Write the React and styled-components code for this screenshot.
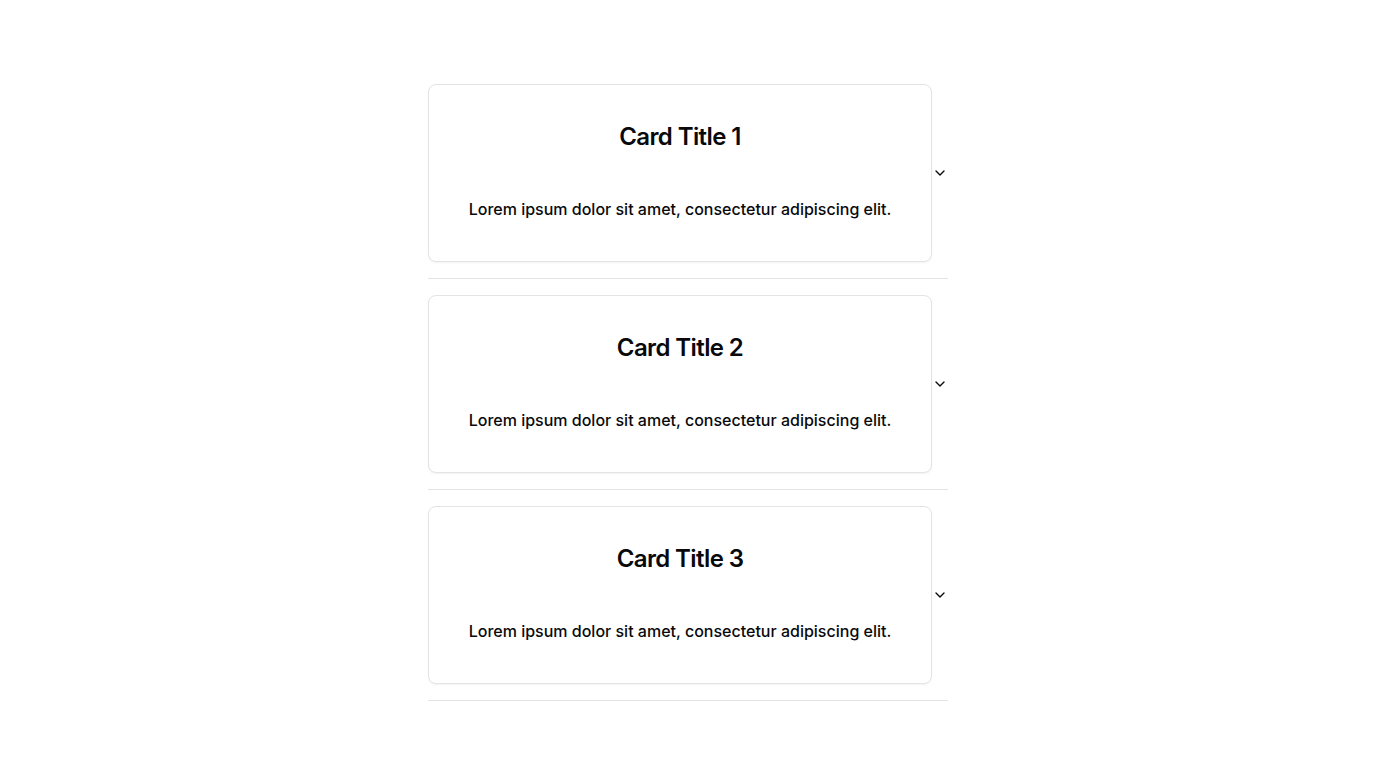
import React from 'react'
import styled, { createGlobalStyle } from 'styled-components'
import { ChevronDown } from 'lucide-react'

const GlobalStyle = createGlobalStyle`
    * { box-sizing: border-box; }
    body {
        margin: 0;
        background: #ffffff;
        font-family: Inter, "Liberation Sans", sans-serif;
        color: #09090b;
    }
`

const cards = [
    { title: 'Card Title 1', description: 'Lorem ipsum dolor sit amet, consectetur adipiscing elit.' },
    { title: 'Card Title 2', description: 'Lorem ipsum dolor sit amet, consectetur adipiscing elit.' },
    { title: 'Card Title 3', description: 'Lorem ipsum dolor sit amet, consectetur adipiscing elit.' },
]

const App = () => {
    return (
        <Page>
            <GlobalStyle />
            <Accordion>
                {cards.map(card => (
                    <Item key={card.title}>
                        <Trigger type="button">
                            <Card>
                                <Title>{card.title}</Title>
                                <Description>{card.description}</Description>
                            </Card>
                            <Chevron size={16} strokeWidth={2} />
                        </Trigger>
                    </Item>
                ))}
            </Accordion>
        </Page>
    )
}

export default App

const Page = styled.div`
    display: flex;
    justify-content: center;
    padding-top: 68px;
`

const Accordion = styled.div`
    width: 520px;
    display: flex;
    flex-direction: column;
`

const Item = styled.div`
    border-bottom: 1px solid #e4e4e7;
`

const Trigger = styled.button`
    display: flex;
    align-items: center;
    width: 100%;
    padding: 16px 0;
    margin: 0;
    border: none;
    background: transparent;
    font-family: inherit;
    font-weight: 500;
    color: #09090b;
    cursor: pointer;
    text-align: center;
`

const Card = styled.div`
    flex: 1;
    height: 178px;
    border: 1px solid #e4e4e7;
    border-radius: 8px;
    background: #ffffff;
    box-shadow: 0 1px 2px rgba(0, 0, 0, 0.05);
    display: flex;
    flex-direction: column;
    align-items: center;
    padding: 36px 24px 0;
`

const Title = styled.h3`
    margin: 0;
    font-size: 24px;
    line-height: 32px;
    font-weight: 600;
    letter-spacing: -0.025em;
`

const Description = styled.p`
    margin: 44px 0 0;
    font-size: 16px;
    line-height: 24px;
    font-weight: 500;
`

const Chevron = styled(ChevronDown)`
    flex-shrink: 0;
    color: #09090b;
`
